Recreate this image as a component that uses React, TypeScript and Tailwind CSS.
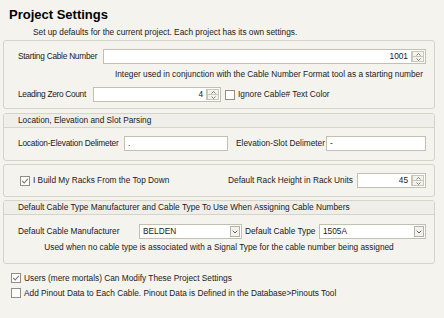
import React from "react";

function Spinner() {
  return (
    <div className="flex h-full w-[11px] flex-col border-l border-[#c9c6ba] bg-[#f3f2ec]">
      <div className="flex flex-1 items-center justify-center border-b border-[#c9c6ba]">
        <svg width="5" height="3" viewBox="0 0 5 3">
          <path d="M0.5 2.5 L2.5 0.5 L4.5 2.5" stroke="#6f6f6f" strokeWidth="0.9" fill="none" />
        </svg>
      </div>
      <div className="flex flex-1 items-center justify-center">
        <svg width="5" height="3" viewBox="0 0 5 3">
          <path d="M0.5 0.5 L2.5 2.5 L4.5 0.5" stroke="#6f6f6f" strokeWidth="0.9" fill="none" />
        </svg>
      </div>
    </div>
  );
}

function NumInput({ value, className }: { value: string; className: string }) {
  return (
    <div className={"flex items-center border border-[#c2bfb3] bg-white " + className}>
      <div className="flex-1 pr-[3px] text-right leading-none">{value}</div>
      <div className="h-full py-[1px] pr-[1px]">
        <div className="h-full border border-[#c9c6ba]">
          <Spinner />
        </div>
      </div>
    </div>
  );
}

function TextInput({ value, className }: { value: string; className: string }) {
  return (
    <div className={"flex items-center border border-[#c2bfb3] bg-white pl-[3px] leading-none " + className}>
      {value}
    </div>
  );
}

function Select({ value, className }: { value: string; className: string }) {
  return (
    <div className={"flex items-center border border-[#c2bfb3] bg-white pl-[3px] pr-[1px] leading-none " + className}>
      <div className="flex-1">{value}</div>
      <div className="flex h-[11px] w-[10px] items-center justify-center border border-[#b5b2a6] bg-[#f3f2ec]">
        <svg width="6" height="4" viewBox="0 0 6 4">
          <path d="M0.7 0.7 L3 3 L5.3 0.7" stroke="#5e5e5e" strokeWidth="1" fill="none" />
        </svg>
      </div>
    </div>
  );
}

function Check({ checked }: { checked?: boolean }) {
  return (
    <div className="flex h-[10px] w-[10px] shrink-0 items-center justify-center border border-[#8f8e87] bg-white">
      {checked && (
        <svg width="8" height="8" viewBox="0 0 8 8">
          <path d="M1.3 4 L3.2 6 L6.8 1.8" stroke="#7a7a7a" strokeWidth="1.1" fill="none" />
        </svg>
      )}
    </div>
  );
}

export default function App() {
  return (
    <div className="h-[318px] w-[444px] overflow-hidden whitespace-nowrap bg-[#f4f3ee] font-['Liberation_Sans',Arial,sans-serif] text-[8.3px] text-[#1a1a1a]">
      <div className="pl-[9px] pt-[7px] text-[13px] font-bold leading-[15px] text-black">Project Settings</div>
      <div className="mt-[5px] pl-[33px] leading-[10px]">
        Set up defaults for the current project. Each project has its own settings.
      </div>

      {/* Panel 1 */}
      <div className="ml-[3px] mt-[3px] h-[69px] w-[432px] rounded-[3px] border border-[#d6d3c8]">
        <div className="mt-[8px] flex h-[15px] items-center pl-[14px] pr-[8px]">
          <div className="w-[85px] tracking-[-0.25px]">Starting Cable Number</div>
          <NumInput value="1001" className="h-[15px] flex-1" />
        </div>
        <div className="mt-[5px] pr-[11px] text-right leading-[10px]">
          Integer used in conjunction with the Cable Number Format tool as a starting number
        </div>
        <div className="mt-[8px] flex h-[15px] items-center pl-[14px]">
          <div className="w-[75px] tracking-[-0.3px]">Leading Zero Count</div>
          <NumInput value="4" className="h-[15px] w-[128px]" />
          <div className="ml-[4px]">
            <Check />
          </div>
          <div className="ml-[3px]">Ignore Cable# Text Color</div>
        </div>
      </div>

      {/* Panel 2 */}
      <div className="ml-[3px] mt-[4px] h-[48px] w-[432px] rounded-[3px] border border-[#d6d3c8]">
        <div className="flex h-[14px] items-center border-b border-[#d6d3c8] bg-[#efeee8] pl-[14px]">
          Location, Elevation and Slot Parsing
        </div>
        <div className="mt-[8px] flex h-[15px] items-center pl-[14px] pr-[8px]">
          <div className="w-[106px] tracking-[-0.2px]">Location-Elevation Delimeter</div>
          <TextInput value="." className="h-[15px] w-[104px]" />
          <div className="ml-[8px] w-[90px]">Elevation-Slot Delimeter</div>
          <TextInput value="-" className="h-[15px] flex-1" />
        </div>
      </div>

      {/* Panel 3 */}
      <div className="ml-[3px] mt-[3px] flex h-[33px] w-[432px] items-center rounded-[3px] border border-[#d6d3c8] pl-[16px] pr-[8px]">
        <Check checked />
        <div className="ml-[3px] flex-1">I Build My Racks From the Top Down</div>
        <div className="mr-[4px]">Default Rack Height in Rack Units</div>
        <NumInput value="45" className="h-[15px] w-[69px]" />
      </div>

      {/* Panel 4 */}
      <div className="ml-[3px] mt-[3px] h-[64px] w-[432px] rounded-[3px] border border-[#d6d3c8]">
        <div className="flex h-[14px] items-center border-b border-[#d6d3c8] bg-[#efeee8] pl-[14px]">
          Default Cable Type Manufacturer and Cable Type To Use When Assigning Cable Numbers
        </div>
        <div className="mt-[9px] flex h-[15px] items-center pl-[14px] pr-[8px]">
          <div className="w-[121px]">Default Cable Manufacturer</div>
          <Select value="BELDEN" className="h-[15px] w-[103px]" />
          <div className="ml-[3px] w-[74px]">Default Cable Type</div>
          <Select value="1505A" className="h-[15px] flex-1" />
        </div>
        <div className="mt-[3px] text-center leading-[10px]">
          Used when no cable type is associated with a Signal Type for the cable number being assigned
        </div>
      </div>

      <div className="mt-[9px] flex h-[10px] items-center pl-[11px]">
        <Check checked />
        <div className="ml-[3px]">Users (mere mortals) Can Modify These Project Settings</div>
      </div>
      <div className="mt-[5px] flex h-[10px] items-center pl-[11px]">
        <Check />
        <div className="ml-[3px]">Add Pinout Data to Each Cable. Pinout Data is Defined in the Database&gt;Pinouts Tool</div>
      </div>
    </div>
  );
}
